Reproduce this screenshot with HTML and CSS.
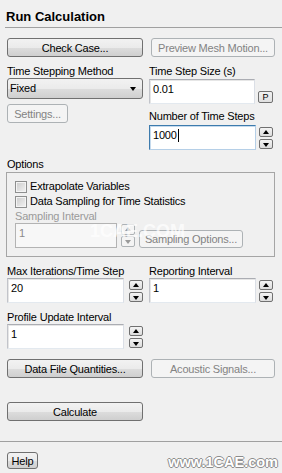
FILE: index.html
```html
<!DOCTYPE html>
<html lang="en">
<head>
    <meta charset="UTF-8">
    <title>Run Calculation</title>
    <link rel="stylesheet" href="styles.css">
</head>
<body>
    <div class="panel">
        <div class="title">Run Calculation</div>

        <div class="btn-row top-buttons">
            <button class="btn w-left">Check Case...</button>
            <button class="btn w-right" disabled>Preview Mesh Motion...</button>
        </div>

        <div class="split">
            <div class="col-left">
                <div class="label">Time Stepping Method</div>
                <div class="select">Fixed<span class="caret"></span></div>
                <button class="btn btn-settings" disabled>Settings...</button>
            </div>
            <div class="col-right">
                <div class="label">Time Step Size (s)</div>
                <div class="field-row p-row">
                    <div class="field w-rfield">0.01</div>
                    <button class="btn-p">P</button>
                </div>
                <div class="label label-gap">Number of Time Steps</div>
                <div class="field-row steps-row">
                    <div class="field w-rfield focused">1000<span class="cursor"></span></div>
                    <div class="spin">
                        <button class="spin-btn up"></button>
                        <button class="spin-btn down"></button>
                    </div>
                </div>
            </div>
        </div>

        <div class="label options-label">Options</div>
        <div class="group">
            <div class="check-row"><span class="checkbox"></span>Extrapolate Variables</div>
            <div class="check-row"><span class="checkbox"></span>Data Sampling for Time Statistics</div>
            <div class="label disabled-text">Sampling Interval</div>
            <div class="field-row sampling-row">
                <div class="field w-sfield disabled">1</div>
                <div class="spin spin-tall">
                    <button class="spin-btn up" disabled></button>
                    <button class="spin-btn down" disabled></button>
                </div>
                <button class="btn btn-sampling" disabled>Sampling Options...</button>
            </div>
        </div>

        <div class="split iter-split">
            <div class="col-left">
                <div class="label">Max Iterations/Time Step</div>
                <div class="field-row">
                    <div class="field w-lfield">20</div>
                    <div class="spin">
                        <button class="spin-btn up"></button>
                        <button class="spin-btn down"></button>
                    </div>
                </div>
            </div>
            <div class="col-right">
                <div class="label">Reporting Interval</div>
                <div class="field-row">
                    <div class="field w-rfield">1</div>
                    <div class="spin">
                        <button class="spin-btn up"></button>
                        <button class="spin-btn down"></button>
                    </div>
                </div>
            </div>
        </div>

        <div class="col-left profile">
            <div class="label">Profile Update Interval</div>
            <div class="field-row">
                <div class="field w-lfield">1</div>
                <div class="spin">
                    <button class="spin-btn up"></button>
                    <button class="spin-btn down"></button>
                </div>
            </div>
        </div>

        <div class="btn-row data-buttons">
            <button class="btn w-left">Data File Quantities...</button>
            <button class="btn w-right" disabled>Acoustic Signals...</button>
        </div>

        <div class="btn-row calc-row">
            <button class="btn w-left">Calculate</button>
        </div>
    </div>

    <div class="separator"></div>

    <div class="footer">
        <button class="btn btn-help">Help</button>
    </div>

    <div class="watermark mid">1CAE.COM</div>
    <div class="watermark corner">www.1CAE.com</div>
</body>
</html>
```

FILE: styles.css
```css
* {
    margin: 0;
    padding: 0;
    box-sizing: border-box;
}

body {
    width: 282px;
    height: 473px;
    background: #f0f0f0;
    color: #000000;
    font-family: 'Liberation Sans', Arial, sans-serif;
    font-size: 11px;
    letter-spacing: -0.2px;
    position: relative;
    overflow: hidden;
}

button {
    font-family: inherit;
    font-size: 11px;
    letter-spacing: -0.2px;
    color: #000000;
}

.panel {
    padding: 0 7px 0 7px;
}

.title {
    margin: 0 -7px 0 -2px;
    padding: 9px 0 2px 1px;
    line-height: 16px;
    font-size: 13px;
    font-weight: bold;
    letter-spacing: 0;
    border-bottom: 1px solid #a0a0a0;
}

.label {
    line-height: 13px;
    height: 13px;
    white-space: nowrap;
}

.disabled-text {
    color: #9a9a9a;
}

/* buttons */
.btn {
    height: 19px;
    border: 1px solid #707070;
    border-radius: 3px;
    background: linear-gradient(to bottom, #f2f2f2 0%, #ebebeb 50%, #dddddd 51%, #cfcfcf 100%);
    line-height: 16px;
    white-space: nowrap;
}

.btn:disabled {
    border-color: #adb2b5;
    background: #f4f4f4;
    color: #838383;
}

.btn-row {
    display: flex;
    gap: 8px;
}

.w-left {
    width: 136px;
}

.w-right {
    width: 124px;
}

.top-buttons {
    margin-top: 10px;
}

.split {
    display: flex;
    gap: 6px;
    margin-top: 8px;
}

.col-left {
    width: 136px;
    display: flex;
    flex-direction: column;
}

.col-right {
    width: 124px;
    display: flex;
    flex-direction: column;
}

.select {
    position: relative;
    height: 21px;
    border: 1px solid #707070;
    border-radius: 3px;
    background: linear-gradient(to bottom, #f2f2f2 0%, #ebebeb 50%, #dddddd 51%, #cfcfcf 100%);
    padding: 3px 0 0 2px;
    line-height: 13px;
}

.caret {
    position: absolute;
    right: 6px;
    top: 8px;
    border-left: 3.5px solid transparent;
    border-right: 3.5px solid transparent;
    border-top: 4px solid #000000;
}

.btn-settings {
    width: 61px;
    margin-top: 5px;
}

/* text fields */
.field-row {
    display: flex;
    align-items: center;
}

.field {
    height: 25px;
    background: #ffffff;
    border: 1px solid #abadb3;
    border-left-color: #c2c4ca;
    border-right-color: #dbdfe6;
    border-bottom-color: #e3e9ef;
    box-shadow: inset 1px 1px 0 #e6e6e6;
    padding: 3px 0 0 3px;
    line-height: 13px;
}

.field.focused {
    border-color: #3d7bad;
    border-bottom-color: #b5cfe7;
    border-right-color: #b5cfe7;
    box-shadow: inset 1px 1px 0 #c5daed;
}

.field.disabled {
    background: #f7f7f7;
    color: #8a8a8a;
    border-color: #b3b3b3;
    box-shadow: none;
}

.cursor {
    display: inline-block;
    width: 1px;
    height: 13px;
    background: #000000;
    vertical-align: top;
    margin-left: 1px;
}

.w-rfield {
    width: 107px;
}

.w-lfield {
    width: 117px;
}

.w-sfield {
    width: 102px;
}

.p-row {
    margin-top: 1px;
    align-items: flex-end;
}

.btn-p {
    width: 15px;
    height: 12px;
    margin: 0 0 1px 3px;
    border: 1px solid #707070;
    border-radius: 2px;
    background: linear-gradient(to bottom, #f2f2f2 0%, #e0e0e0 100%);
    font-size: 9px;
    line-height: 9px;
    letter-spacing: 0;
}

.label-gap {
    margin-top: 6px;
}

.steps-row {
    margin-top: 2px;
}

/* spinners */
.spin {
    display: flex;
    flex-direction: column;
    gap: 2px;
    margin-left: 5px;
}

.col-right .spin {
    margin-left: 3px;
}

.spin-btn {
    width: 14px;
    height: 10px;
    border: 1px solid #707070;
    border-radius: 2px;
    background: linear-gradient(to bottom, #f4f4f4 0%, #dcdcdc 100%);
    position: relative;
}

.spin-btn::before {
    content: '';
    position: absolute;
    left: 3px;
    border-left: 3.5px solid transparent;
    border-right: 3.5px solid transparent;
}

.spin-btn.up::before {
    top: 2px;
    border-bottom: 4px solid #000000;
}

.spin-btn.down::before {
    top: 3px;
    border-top: 4px solid #000000;
}

.spin-btn:disabled {
    border-color: #adb2b5;
    background: #f4f4f4;
}

.spin-btn.up:disabled::before {
    border-bottom-color: #9a9a9a;
}

.spin-btn.down:disabled::before {
    border-top-color: #9a9a9a;
}

.spin-tall .spin-btn {
    height: 11px;
}

.spin-tall {
    gap: 1px;
    margin-left: 4px;
}

/* options group */
.options-label {
    margin-top: 8px;
}

.group {
    margin: 1px 0 0 -1px;
    border: 1px solid #a5a5a5;
    padding: 7px 8px 8px 8px;
}

.check-row {
    display: flex;
    align-items: flex-start;
    height: 15px;
    line-height: 13px;
    white-space: nowrap;
}

.checkbox {
    width: 12px;
    height: 12px;
    margin: 1px 3px 0 0;
    border: 1px solid #8e8f8f;
    background: linear-gradient(135deg, #cbcbcb 0%, #f3f3f3 100%);
    box-shadow: inset 0 0 0 1px #f4f4f4;
}

.sampling-row {
    align-items: center;
}

.btn-sampling {
    width: 104px;
    height: 18px;
    margin-left: 4px;
    align-self: flex-end;
}

.iter-split {
    margin-top: 8px;
}

.profile {
    margin-top: 8px;
}

.data-buttons {
    margin-top: 10px;
}

.calc-row {
    margin-top: 24px;
}

.separator {
    margin-top: 20px;
    border-top: 1px solid #a0a0a0;
}

.footer {
    padding: 10px 7px 0 7px;
}

.btn-help {
    width: 31px;
    height: 17px;
    line-height: 14px;
}

/* image watermarks */
.watermark {
    position: absolute;
    font-weight: bold;
    letter-spacing: 0;
    white-space: nowrap;
    pointer-events: none;
}

.watermark.mid {
    left: 90px;
    top: 221px;
    font-size: 18px;
    color: rgba(255, 255, 255, 0.7);
}

.watermark.corner {
    right: 4px;
    bottom: 3px;
    font-size: 14.5px;
    color: #ffffff;
    text-shadow: 1px 0 0 #8c8c8c, -1px 0 0 #8c8c8c, 0 1px 0 #8c8c8c, 0 -1px 0 #8c8c8c;
}
```
